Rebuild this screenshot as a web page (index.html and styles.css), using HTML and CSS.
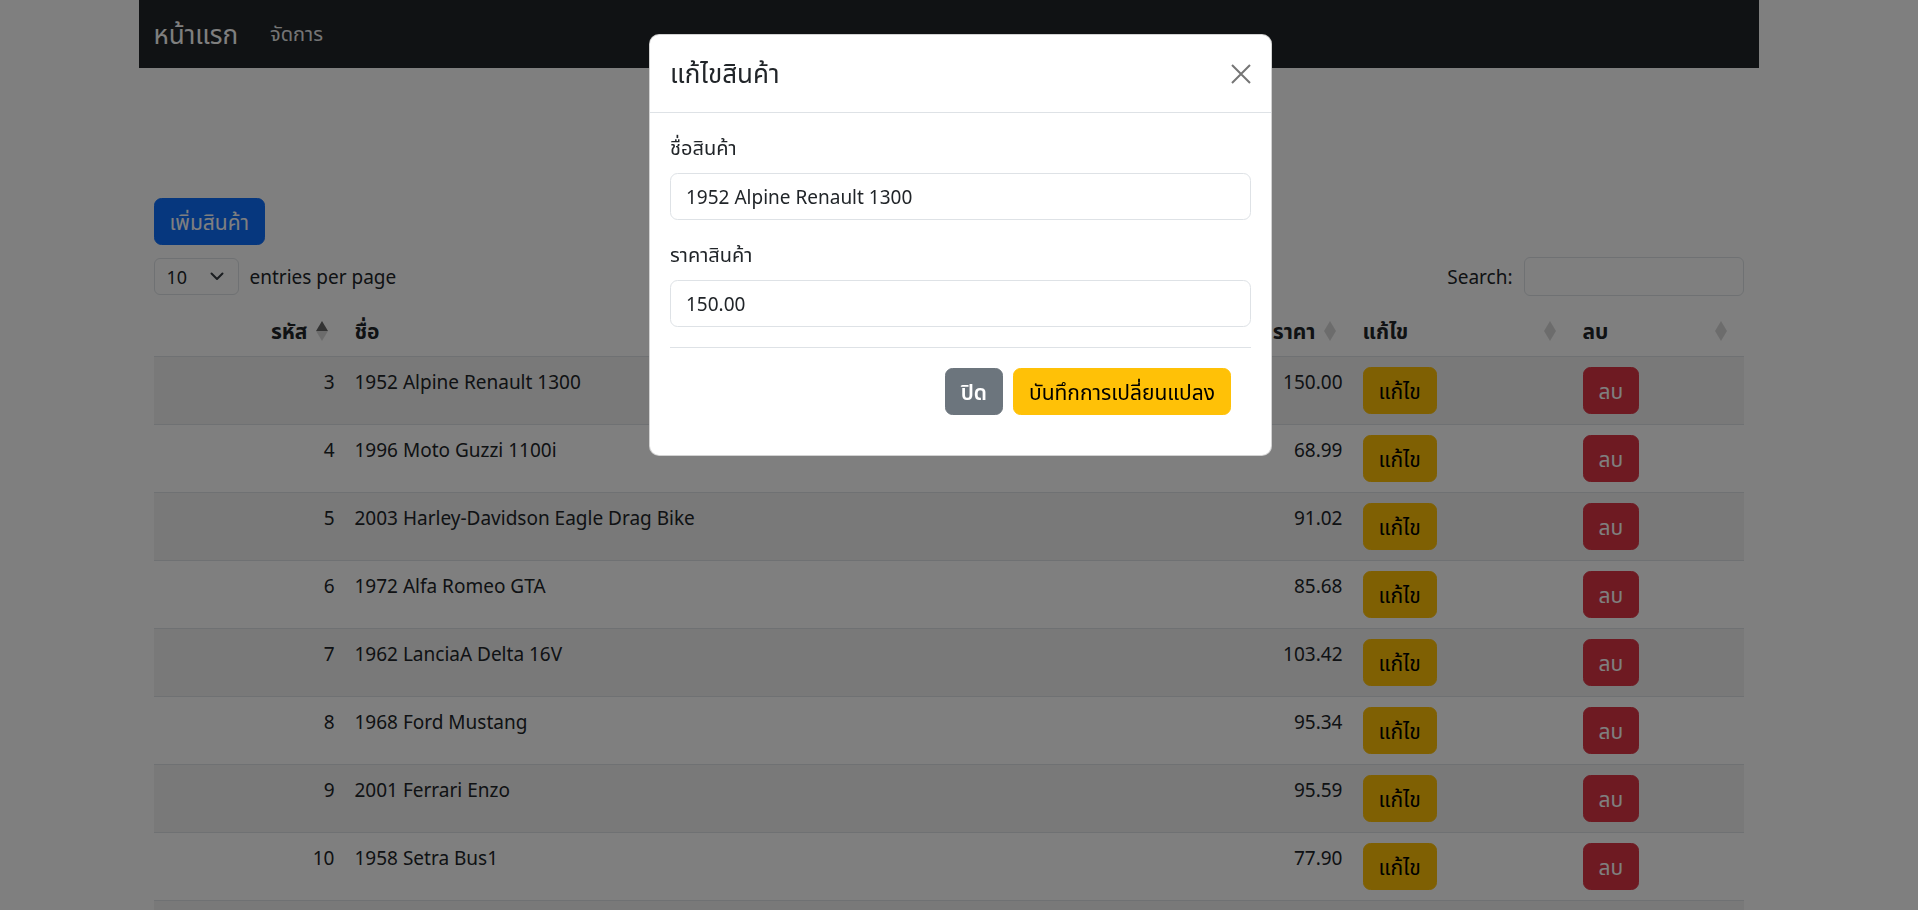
FILE: index.html
```html
<!DOCTYPE html>
<html lang="th">
<head>
<meta charset="utf-8">
<title>แก้ไขสินค้า</title>
<link rel="stylesheet" href="styles.css">
</head>
<body>
<div class="container">
  <nav class="navbar">
    <a class="brand">หน้าแรก</a>
    <a class="nav-link">จัดการ</a>
  </nav>
  <main class="main">
    <button class="btn btn-primary add-btn">เพิ่มสินค้า</button>
    <div class="dt-top">
      <div class="dt-length">
        <div class="select">
          <span>10</span>
          <svg class="chev" width="14" height="9" viewBox="0 0 14 9"><path d="M1.5 1.5 L7 7 L12.5 1.5" fill="none" stroke="#343a40" stroke-width="2" stroke-linecap="round" stroke-linejoin="round"/></svg>
        </div>
        <span class="dt-label">entries per page</span>
      </div>
      <div class="dt-search">
        <span class="dt-label">Search:</span>
        <div class="search-input"></div>
      </div>
    </div>
    <table class="table">
      <colgroup>
        <col class="c-id"><col class="c-name"><col class="c-price"><col class="c-edit"><col class="c-del">
      </colgroup>
      <thead>
        <tr>
          <th class="num"><span class="th-text">รหัส</span><span class="order asc"></span></th>
          <th><span class="th-text">ชื่อ</span></th>
          <th class="num"><span class="th-text">ราคา</span><span class="order"></span></th>
          <th><span class="th-text">แก้ไข</span><span class="order"></span></th>
          <th><span class="th-text">ลบ</span><span class="order"></span></th>
        </tr>
      </thead>
      <tbody>
        <tr><td class="num">3</td><td>1952 Alpine Renault 1300</td><td class="num">150.00</td><td><button class="btn btn-warning">แก้ไข</button></td><td><button class="btn btn-danger">ลบ</button></td></tr>
        <tr><td class="num">4</td><td>1996 Moto Guzzi 1100i</td><td class="num">68.99</td><td><button class="btn btn-warning">แก้ไข</button></td><td><button class="btn btn-danger">ลบ</button></td></tr>
        <tr><td class="num">5</td><td>2003 Harley-Davidson Eagle Drag Bike</td><td class="num">91.02</td><td><button class="btn btn-warning">แก้ไข</button></td><td><button class="btn btn-danger">ลบ</button></td></tr>
        <tr><td class="num">6</td><td>1972 Alfa Romeo GTA</td><td class="num">85.68</td><td><button class="btn btn-warning">แก้ไข</button></td><td><button class="btn btn-danger">ลบ</button></td></tr>
        <tr><td class="num">7</td><td>1962 LanciaA Delta 16V</td><td class="num">103.42</td><td><button class="btn btn-warning">แก้ไข</button></td><td><button class="btn btn-danger">ลบ</button></td></tr>
        <tr><td class="num">8</td><td>1968 Ford Mustang</td><td class="num">95.34</td><td><button class="btn btn-warning">แก้ไข</button></td><td><button class="btn btn-danger">ลบ</button></td></tr>
        <tr><td class="num">9</td><td>2001 Ferrari Enzo</td><td class="num">95.59</td><td><button class="btn btn-warning">แก้ไข</button></td><td><button class="btn btn-danger">ลบ</button></td></tr>
        <tr><td class="num">10</td><td>1958 Setra Bus1</td><td class="num">77.90</td><td><button class="btn btn-warning">แก้ไข</button></td><td><button class="btn btn-danger">ลบ</button></td></tr>
        <tr class="tail"><td class="num"></td><td></td><td class="num"></td><td><span class="btn btn-warning btn-stub"></span></td><td><span class="btn btn-danger btn-stub"></span></td></tr>
      </tbody>
    </table>
  </main>
</div>

<div class="backdrop"></div>
<div class="modal">
  <div class="modal-content">
    <div class="modal-header">
      <h5 class="modal-title">แก้ไขสินค้า</h5>
      <button class="btn-close" aria-label="Close">
        <svg width="20" height="20" viewBox="0 0 20 20"><path d="M1 1 L19 19 M19 1 L1 19" stroke="#757575" stroke-width="2" fill="none"/></svg>
      </button>
    </div>
    <div class="modal-body">
      <label class="form-label">ชื่อสินค้า</label>
      <div class="form-control">1952 Alpine Renault 1300</div>
      <label class="form-label">ราคาสินค้า</label>
      <div class="form-control">150.00</div>
      <div class="modal-footer">
        <button class="btn btn-secondary">ปิด</button>
        <button class="btn btn-warning">บันทึกการเปลี่ยนแปลง</button>
      </div>
    </div>
  </div>
</div>
</body>
</html>
```

FILE: styles.css
```css
* { box-sizing: border-box; }

html, body {
  margin: 0;
  height: 100%;
  overflow: hidden;
}

body {
  padding-right: 21px;
  font-family: "Noto Sans", "Noto Sans Thai", "Leelawadee UI", Tahoma, sans-serif;
  font-size: 19px;
  line-height: 30px;
  color: #212529;
  background: #fff;
}

.container {
  max-width: 1620px;
  margin: 0 auto;
}

.navbar {
  height: 68px;
  background: #212529;
  display: flex;
  align-items: center;
  padding: 0 15px;
}

.brand {
  font-size: 26px;
  line-height: 37px;
  color: #fff;
  margin-right: 22px;
}

.nav-link {
  font-size: 20px;
  color: rgba(255, 255, 255, 0.92);
  padding: 0 10px;
}

.main {
  padding: 130px 15px 0;
}

.btn {
  display: inline-block;
  font-family: inherit;
  font-size: 21px;
  line-height: 30px;
  padding: 7.5px 15px;
  border: 1px solid transparent;
  border-radius: 7.5px;
  cursor: pointer;
}

.btn-primary { background: #0d6efd; border-color: #0d6efd; color: #fff; }
.btn-warning { background: #ffc107; border-color: #ffc107; color: #000; }
.btn-danger { background: #dc3545; border-color: #dc3545; color: #fff; }
.btn-secondary { background: #6c757d; border-color: #6c757d; color: #fff; font-weight: 600; }

.add-btn { display: block; }

.btn-stub {
  width: 78px;
  height: 47px;
}

.dt-top {
  margin-top: 12px;
  display: flex;
  justify-content: space-between;
  align-items: center;
}

.dt-length, .dt-search {
  display: flex;
  align-items: center;
  gap: 11px;
}

.select {
  width: 85px;
  height: 37px;
  border: 1px solid #dee2e6;
  border-radius: 6px;
  display: flex;
  align-items: center;
  justify-content: space-between;
  padding: 0 14px 0 12px;
  font-size: 18px;
}

.search-input {
  width: 220px;
  height: 39px;
  border: 1px solid #dee2e6;
  border-radius: 6px;
}

.table {
  width: 100%;
  margin-top: 10px;
  border-collapse: collapse;
  table-layout: fixed;
}

.c-id { width: 191px; }
.c-price { width: 120px; }
.c-edit { width: 220px; }
.c-del { width: 171px; }

.table th, .table td {
  padding: 10px;
  border-bottom: 1px solid #dee2e6;
  text-align: left;
  vertical-align: top;
  white-space: nowrap;
}

.table th {
  position: relative;
  font-size: 21px;
  font-weight: 700;
  padding-right: 37px;
}

.table .num { text-align: right; }

.table tbody tr:nth-child(odd) td {
  background: #f2f2f2;
}

.order {
  position: absolute;
  right: 15px;
  top: 0;
  bottom: 0;
  width: 15px;
}

.order::before, .order::after {
  content: "";
  position: absolute;
  left: 1px;
  border-left: 6px solid transparent;
  border-right: 6px solid transparent;
  opacity: 0.15;
}

.order::before {
  bottom: 50%;
  border-bottom: 10px solid #000;
}

.order::after {
  top: 50%;
  border-top: 10px solid #000;
}

.order.asc::before { opacity: 0.6; }

.backdrop {
  position: fixed;
  inset: 0;
  background: rgba(0, 0, 0, 0.5);
}

.modal {
  position: fixed;
  inset: 0;
  display: flex;
  justify-content: center;
  align-items: flex-start;
  padding-top: 34px;
  padding-left: 3px;
}

.modal-content {
  width: 623px;
  background: #fff;
  border: 1px solid rgba(0, 0, 0, 0.175);
  border-radius: 10px;
}

.modal-header {
  display: flex;
  align-items: center;
  justify-content: space-between;
  padding: 20px;
  border-bottom: 1px solid #dee2e6;
}

.modal-title {
  margin: 0;
  font-size: 26px;
  line-height: 37px;
  font-weight: 400;
}

.btn-close {
  width: 30px;
  height: 30px;
  padding: 5px;
  margin-right: -5px;
  border: 0;
  background: transparent;
  display: flex;
  align-items: center;
  justify-content: center;
}

.modal-body {
  padding: 20px;
}

.form-label {
  display: block;
  font-size: 20px;
  margin-bottom: 10px;
}

.form-control {
  height: 47px;
  border: 1px solid #dee2e6;
  border-radius: 7.5px;
  padding: 7.5px 15px;
  margin-bottom: 20px;
}

.modal-footer {
  border-top: 1px solid #dee2e6;
  padding: 15px;
  display: flex;
  justify-content: flex-end;
}

.modal-footer .btn {
  margin: 5px;
}
```
